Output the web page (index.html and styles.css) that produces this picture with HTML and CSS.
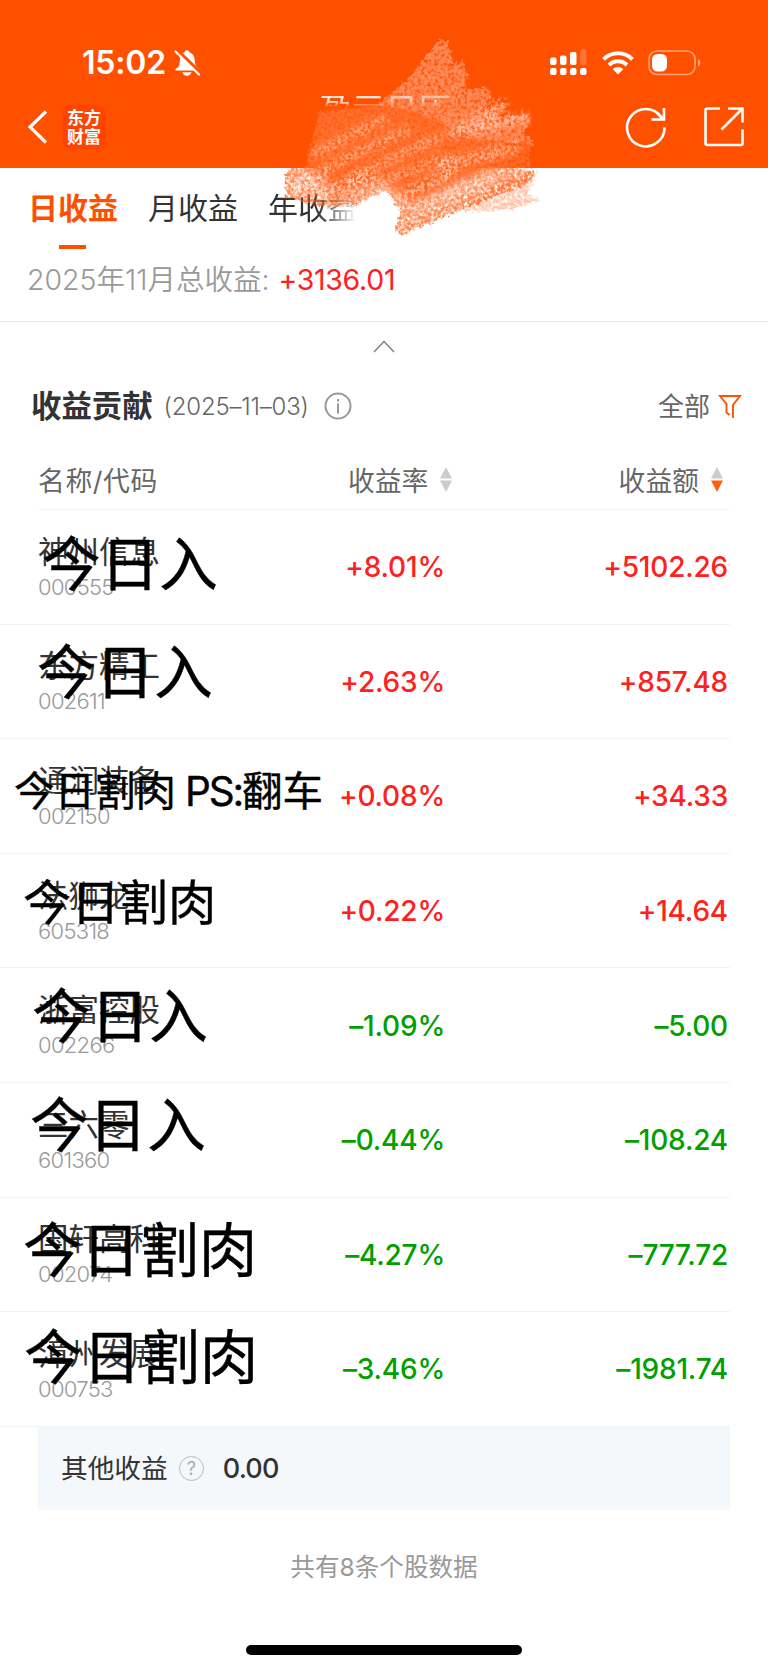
FILE: index.html
```
<!DOCTYPE html>
<html lang="zh-CN">
<head>
  <meta charset="UTF-8" />
  <meta name="viewport" content="width=device-width, initial-scale=1.0"/>
  <title>盈亏日历</title>
  <link rel="stylesheet" href="styles.css">
</head>
<body>

<header class="header">
  <div class="status">
    <span class="time">15:02</span>
    <svg class="bell" width="27" height="28" viewBox="0 0 27 28">
      <path d="M4 18.500C6 16 5.500 13 6 10C6.500 6.500 8.500 4 10.500 3.300C11 .5 15 .5 15.500 3.300C19 4.500 20.500 7.500 20.700 11C21 15 21.500 17 24.500 19.500C25 20.500 24.500 21.500 23.500 21.500H2.500C.8 21.500 .8 20 4 18.500Z" fill="#fff"/>
      <path d="M8.500 23.300H17.500C16.500 28 9.500 28 8.500 23.300Z" fill="#fff"/>
      <path d="M2.800 1.200L27 24.500" stroke="#ff5000" stroke-width="4"/>
      <path d="M1.500 2.500L25 25.500" stroke="#fff" stroke-width="2.200" stroke-linecap="round"/>
    </svg>
    <div class="indicators">
      <svg width="38" height="27" viewBox="0 0 38 27" fill="#fff">
        <rect x="0" y="8.500" width="6.500" height="7.500" rx="2"/>
        <rect x="10" y="6.500" width="6.500" height="9.500" rx="2"/>
        <rect x="20" y="3" width="6.500" height="13" rx="2"/>
        <rect x="30" y="0" width="6.500" height="16" rx="2" opacity=".2"/>
        <rect x="0" y="19" width="6.500" height="7" rx="2"/>
        <rect x="10" y="19" width="6.500" height="7" rx="2"/>
        <rect x="20" y="19" width="6.500" height="7" rx="2"/>
        <rect x="30" y="19" width="6.500" height="7" rx="2"/>
      </svg>
      <svg width="32" height="24" viewBox="0 0 32 24" fill="none" stroke="#fff" stroke-width="4">
        <path d="M1.500 8.300C9.500 .2 22.500 .2 30.500 8.300"/>
        <path d="M7 14C12 9 20 9 25 14"/>
        <path d="M10.800 18.300C13.500 15.300 18.500 15.300 21.200 18.300L16 23.500Z" fill="#fff" stroke="none"/>
      </svg>
      <svg width="53" height="26" viewBox="0 0 53 26">
        <rect x="1" y="1" width="46" height="23.500" rx="8" fill="none" stroke="#fff" stroke-width="1.600" opacity=".45"/>
        <rect x="4" y="4" width="15" height="17.500" rx="5.500" fill="#fff"/>
        <path d="M50 9V16.500C53 15 53 10.500 50 9Z" fill="#fff" opacity=".5"/>
      </svg>
    </div>
  </div>
  <div class="nav">
    <svg class="back" width="20" height="34" viewBox="0 0 20 34" fill="none" stroke="#fff" stroke-width="3.200">
      <path d="M18 1.500L2 17L18 32.500"/>
    </svg>
    <div class="logo"><span>东方</span><span>财富</span></div>
    <div class="nav-title">盈亏日历</div>
    <svg class="refresh" width="42" height="42" viewBox="0 0 42 42" fill="none" stroke="#fff" stroke-width="2.600">
      <path d="M39.500 21.500A18.700 18.700 0 1 1 36.500 11.500"/>
      <path d="M39 2V13.500H26.500M38.500 13.500L32 7"/>
    </svg>
    <svg class="share" width="42" height="42" viewBox="0 0 42 42" fill="none" stroke="#fff" stroke-width="2.600">
      <path d="M17 2.500H4.500Q2.500 2.500 2.500 4.500V37Q2.500 39 4.500 39H38Q39.500 39 39.500 37.500V23.500"/>
      <path d="M25 2.500H39.500V16.500M39 3L18.500 23.500"/>
    </svg>
  </div>
</header>

<nav class="tabs">
  <span class="tab active">日收益</span>
  <span class="tab">月收益</span>
  <span class="tab faded">年收益</span>
</nav>

<div class="total">
  <span>2025年11月总收益:</span><b>+3136.01</b>
</div>

<div class="collapse">
  <svg width="22" height="13" viewBox="0 0 22 13" fill="none" stroke="#888" stroke-width="1.600">
    <path d="M1 12L11 1.500L21 12"/>
  </svg>
</div>

<main>
  <div class="section-head">
    <h2>收益贡献</h2>
    <span class="date">(2025–11–03)</span>
    <svg width="28" height="28" viewBox="0 0 28 28" fill="none" stroke="#999" stroke-width="2">
      <circle cx="14" cy="14" r="12.500"/>
      <path d="M14 11.500V21.500M14 7V9.500"/>
    </svg>
    <span class="all">全部</span>
    <svg width="24" height="25" viewBox="0 0 24 25" fill="none" stroke="#ff5000" stroke-width="1.900">
      <path d="M15 24V11L22 2H2L8.500 10V18.500L11.500 21"/>
    </svg>
  </div>

  <div class="columns">
    <span class="name-head">名称/代码</span>
    <span class="rate-head">收益率
      <svg width="12" height="25" viewBox="0 0 12 25" fill="#ccc"><path d="M6 0L12 11.500H0ZM0 13.500H12L6 25Z"/></svg>
    </span>
    <span class="amount-head">收益额
      <svg width="12" height="25" viewBox="0 0 12 25"><path d="M6 0L12 11.500H0Z" fill="#ccc"/><path d="M0 13.500H12L6 25Z" fill="#ff6010"/></svg>
    </span>
  </div>

  <div class="row up">
    <div class="stock"><p>神州信息</p><small>000555</small></div>
    <span class="rate">+8.01%</span><span class="amount">+5102.26</span>
    <div class="note n1">今日入</div>
  </div>
  <div class="row up">
    <div class="stock"><p>东方精工</p><small>002611</small></div>
    <span class="rate">+2.63%</span><span class="amount">+857.48</span>
    <div class="note n2">今日入</div>
  </div>
  <div class="row up">
    <div class="stock"><p>通润装备</p><small>002150</small></div>
    <span class="rate">+0.08%</span><span class="amount">+34.33</span>
    <div class="note n3">今日割肉 <i>PS:</i>翻车</div>
  </div>
  <div class="row up">
    <div class="stock"><p>法狮龙</p><small>605318</small></div>
    <span class="rate">+0.22%</span><span class="amount">+14.64</span>
    <div class="note n4">今日割肉</div>
  </div>
  <div class="row down">
    <div class="stock"><p>浙富控股</p><small>002266</small></div>
    <span class="rate">–1.09%</span><span class="amount">–5.00</span>
    <div class="note n5">今日入</div>
  </div>
  <div class="row down">
    <div class="stock"><p>三六零</p><small>601360</small></div>
    <span class="rate">–0.44%</span><span class="amount">–108.24</span>
    <div class="note n6">今日入</div>
  </div>
  <div class="row down">
    <div class="stock"><p>国轩高科</p><small>002074</small></div>
    <span class="rate">–4.27%</span><span class="amount">–777.72</span>
    <div class="note n7">今日割肉</div>
  </div>
  <div class="row down">
    <div class="stock"><p>漳州发展</p><small>000753</small></div>
    <span class="rate">–3.46%</span><span class="amount">–1981.74</span>
    <div class="note n8">今日割肉</div>
  </div>

  <div class="other">
    <span>其他收益</span>
    <span class="help">?</span>
    <b>0.00</b>
  </div>
</main>

<footer>共有8条个股数据</footer>
<div class="home-bar"></div>

<!-- crayon scribble over the title -->
<svg class="scribble" width="300" height="220" viewBox="260 30 300 220">
  <defs>
    <filter id="rough" x="-10%" y="-10%" width="120%" height="120%">
      <feTurbulence type="fractalNoise" baseFrequency=".3" numOctaves="3" seed="4" result="n"/>
      <feDisplacementMap in="SourceGraphic" in2="n" scale="8" xChannelSelector="R" yChannelSelector="G" result="d"/>
      <feColorMatrix in="n" type="matrix" values="0 0 0 0 0  0 0 0 0 0  0 0 0 0 0  0 0 0 2.500 -.55" result="a"/>
      <feComposite in="d" in2="a" operator="in"/>
      <feGaussianBlur stdDeviation=".5"/>
    </filter>
    <filter id="grain" x="-20%" y="-20%" width="140%" height="140%">
      <feTurbulence type="fractalNoise" baseFrequency=".3" numOctaves="3" seed="9" result="n"/>
      <feGaussianBlur in="SourceGraphic" stdDeviation="3" result="b"/>
      <feDisplacementMap in="b" in2="n" scale="12" xChannelSelector="R" yChannelSelector="G" result="d"/>
      <feColorMatrix in="n" type="matrix" values="0 0 0 0 0  0 0 0 0 0  0 0 0 0 0  0 0 0 5 -2" result="a"/>
      <feComposite in="d" in2="a" operator="in"/>
      <feGaussianBlur stdDeviation=".45"/>
    </filter>
    <filter id="soft"><feGaussianBlur stdDeviation="4"/></filter>
  </defs>
  <path d="M322 110L400 107L500 115L510 160L460 182L415 205L387 182L335 195L312 168Z" fill="#ff5a10" filter="url(#soft)"/>
  <path d="M288 172L308 164L500 164L536 172L534 182L460 211L404 235L397 230L402 211L388 190L357 206L330 207L287 197Z" fill="#ff5a10" opacity=".72" filter="url(#rough)"/>
  <path d="M515 178L540 172L529 194L543 200L527 205L517 209L458 212Z" fill="#ff5a10" opacity=".35" filter="url(#rough)"/>
  <path d="M442 39L450 42L455 62L452 68L465 61L470 77L466 90L490 87L493 96L483 111L509 103L498 117L530 113L533 125L526 132L536 143L530 152L534 168L470 195L410 220L388 188L345 195L308 170L312 147L317 127L322 112L379 105L409 80Z" fill="#ffa078" opacity=".35" filter="url(#rough)"/>
  <path d="M442 39L450 42L455 62L452 68L465 61L470 77L466 90L490 87L493 96L483 111L509 103L498 117L530 113L533 125L526 132L536 143L480 140L420 112L379 105L409 80Z" fill="#ffa888" opacity=".55" filter="url(#rough)"/>
  <g fill="none" stroke="#fff" stroke-linecap="round" filter="url(#grain)">
    <path d="M316 153L385 120M328 168L408 130M352 178L440 138M375 184L450 158" stroke-width="9" opacity=".45"/>
    <path d="M455 133L525 118M462 130L504 105M445 165L515 148" stroke-width="13" opacity=".45"/>
    <path d="M405 195L455 172M415 206L490 178" stroke-width="10" opacity=".55"/>
    <path d="M322 193L372 178M296 188L325 176" stroke-width="12" opacity=".6"/>
  </g>
  <path d="M360 206L387 190L397 210Z" fill="#fff" opacity=".7" filter="url(#soft)"/>
</svg>

</body>
</html>
```
FILE: styles.css
```
body {
  margin: 0;
  width: 768px;
  height: 1670px;
  position: relative;
  overflow: hidden;
  background: #fff;
  color: #333;
  font-family: Inter, 'Noto Sans CJK SC', sans-serif;
}

svg {
  display: block;
  flex: none;
}

.header {
  height: 168px;
  background: #ff5000;
  color: #fff;
}

.status {
  display: flex;
  align-items: center;
  height: 88px;
  padding: 37px 67px 0 82px;
  box-sizing: border-box;
}

.time {
  width: 92px;
  font-size: 32px;
  font-weight: 600;
  letter-spacing: -0.2px;
}

.indicators {
  display: flex;
  align-items: center;
  margin-left: auto;
  gap: 14px;
}

.nav {
  display: flex;
  align-items: center;
  height: 78px;
  padding: 0 23px 0 28px;
}

.logo {
  display: flex;
  flex-direction: column;
  align-items: center;
  justify-content: center;
  width: 44px;
  height: 44px;
  margin-left: 14px;
  padding-bottom: 2px;
  box-sizing: border-box;
  border-radius: 9px;
  background: #ff4400;
  font: 700 17px/19px 'Noto Sans CJK SC', sans-serif;
}

/* only the top edge of the title stays visible */
.nav-title {
  align-self: flex-start;
  height: 14px;
  margin: 5px 0 0 213px;
  overflow: hidden;
  font-size: 33px;
  line-height: 35px;
  opacity: 0.85;
  -webkit-mask-image: linear-gradient(#000 60%, transparent);
  mask-image: linear-gradient(#000 60%, transparent);
}

.refresh {
  margin-left: auto;
}

.share {
  margin-left: 36px;
}

.tabs {
  display: flex;
  height: 82px;
  padding-left: 28px;
  gap: 30px;
  font-size: 30px;
  line-height: 80px;
}

.tab {
  position: relative;
}

.active {
  color: #ff5000;
  font-weight: 600;
}

.active::after {
  content: '';
  position: absolute;
  left: 31px;
  top: 77px;
  width: 27px;
  height: 4px;
  background: #ff5000;
}

.faded {
  -webkit-mask-image: linear-gradient(to right, #000 55%, transparent 98%);
  mask-image: linear-gradient(to right, #000 55%, transparent 98%);
}

.total {
  display: flex;
  height: 71px;
  padding-left: 27px;
  border-bottom: 1px solid #e8e8e8;
  font-size: 28.5px;
  line-height: 60px;
  font-weight: 350;
  color: #999;
}

.total b {
  margin-left: 9px;
  font-weight: 400;
  letter-spacing: -0.3px;
  color: #ff2020;
}

.collapse {
  display: flex;
  justify-content: center;
  padding: 18px 0 0;
  height: 31px;
}

.section-head {
  display: flex;
  align-items: center;
  height: 70px;
  padding: 0 26px 0 31px;
}

h2 {
  margin: -4px 0 0;
  font-size: 30.4px;
  font-weight: 600;
}

.date {
  margin: 0 15px 0 11px;
  font-size: 24px;
  letter-spacing: -0.2px;
  font-weight: 350;
  color: #666;
}

.all {
  margin: -3px 8px 0 auto;
  font-size: 26px;
  color: #666;
}

.columns {
  display: grid;
  grid-template-columns: 310px 200px 1fr;
  align-items: center;
  height: 69px;
  margin: 0 38px;
  padding-top: 9px;
  box-sizing: border-box;
  border-bottom: 1px solid #f4f4f4;
  font-size: 26.8px;
  color: #666;
}

.name-head {
  letter-spacing: 0.6px;
}

.rate-head,
.amount-head {
  display: flex;
  align-items: center;
  gap: 12px;
}

.amount-head {
  justify-content: flex-end;
  padding-right: 7px;
}

.row {
  position: relative;
  display: grid;
  grid-template-columns: 407px 283px;
  align-items: center;
  width: 692px;
  height: 114.600px;
  padding-left: 38px;
  box-shadow: inset 0 -1px #f2f2f2;
}

.stock {
  grid-area: 1 / 1;
}

.stock p {
  margin: 0;
  font-size: 30.500px;
  line-height: 39px;
  color: #333;
}

.stock small {
  display: block;
  font-size: 22px;
  line-height: 32px;
  letter-spacing: -0.7px;
  font-weight: 350;
  color: #999;
}

.rate,
.amount {
  font-size: 28px;
  font-weight: 500;
  letter-spacing: -0.2px;
  text-align: right;
}

.rate {
  grid-area: 1 / 1;
}

.up {
  color: #ff2020;
}

.down {
  color: #00a000;
}

/* handwritten notes on top of the names */
.note {
  position: absolute;
  color: #000;
  font: 400 58.600px/60px 'Noto Sans CJK SC', sans-serif;
  -webkit-text-stroke: 0.4px #000;
  white-space: nowrap;
}

.note i {
  font-style: normal;
  font-family: Inter, sans-serif;
  letter-spacing: -2.2px;
}

.n1 { left: 42px; top: 21px; }
.n2 { left: 37px; top: 14px; }
.n3 { left: 14px; top: 20px; font-size: 40.500px; }
.n4 { left: 23px; top: 15px; font-size: 48.300px; }
.n5 { left: 32px; top: 15px; }
.n6 { left: 30px; top: 9px; }
.n7 { left: 23px; top: 19px; }
.n8 { left: 24px; top: 12px; }

.other {
  display: flex;
  align-items: center;
  width: 692px;
  height: 83px;
  margin-left: 38px;
  padding-left: 23px;
  box-sizing: border-box;
  background: #f5f8fa;
  font-size: 26.700px;
}

.other span:first-child {
  margin-top: -3px;
}

.help {
  width: 23px;
  margin: 0 19px 0 11px;
  border: 1.500px solid #bbb;
  border-radius: 50%;
  font-size: 18px;
  line-height: 23px;
  text-align: center;
  color: #aaa;
}

.other b {
  font-size: 27px;
  font-weight: 500;
  letter-spacing: -0.8px;
}

footer {
  height: 135px;
  font-size: 24.600px;
  line-height: 114px;
  text-align: center;
  color: #999;
}

.home-bar {
  width: 276px;
  height: 10px;
  margin: 0 auto;
  border-radius: 5px;
  background: #000;
}

.scribble {
  position: absolute;
  left: 258px;
  top: 30px;
}
```
